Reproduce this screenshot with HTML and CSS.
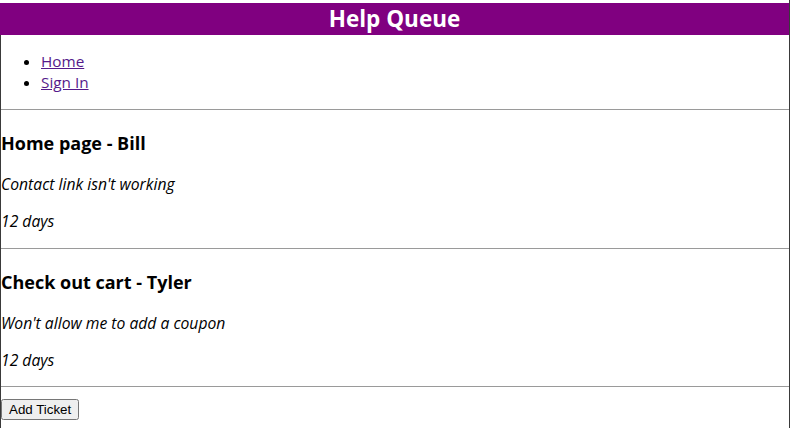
FILE: index.html
```html
<!DOCTYPE html>
<html>
<head>
<meta charset="utf-8">
<link rel="stylesheet" href="styles.css">
</head>
<body>
<div class="page">
  <header class="bar"><h1 class="title">Help Queue</h1></header>
  <div class="content">
    <ul class="nav">
      <li><a href="#" class="link">Home</a></li>
      <li><a href="#" class="link">Sign In</a></li>
    </ul>
    <hr class="rule">
    <div class="ticket">
      <h3 class="ticket-title">Home page - Bill</h3>
      <p class="ticket-text">Contact link isn't working</p>
      <p class="ticket-text">12 days</p>
    </div>
    <hr class="rule">
    <div class="ticket">
      <h3 class="ticket-title">Check out cart - Tyler</h3>
      <p class="ticket-text">Won't allow me to add a coupon</p>
      <p class="ticket-text">12 days</p>
    </div>
    <hr class="rule">
    <div class="actions"><button class="btn">Add Ticket</button></div>
  </div>
</div>
</body>
</html>
```
FILE: styles.css
```css
html, body {
  margin: 0;
  padding: 0;
  background: #fff;
}
body {
  font-family: "Open Sans", "Noto Sans", sans-serif;
  color: #000;
}
.page {
  width: 789px;
  min-height: 428px;
  border-right: 1px solid #3a3a3a;
  padding-top: 3px;
  box-sizing: content-box;
}
.bar {
  background: #800080;
}
.title {
  margin: 0;
  font-size: 22.5px;
  line-height: 32px;
  font-weight: bold;
  color: #fff;
  text-align: center;
}
.content {
  border-left: 1px solid #3a3a3a;
  min-height: 393px;
  display: flow-root;
}
.nav {
  margin: 16px 0;
  padding-left: 40px;
  font-size: 15.3px;
  line-height: 21px;
}
.link {
  color: #551a8b;
}
.rule {
  margin: 0;
  border: 0;
  border-top: 1px solid #9a9a9a;
  height: 0;
}
.ticket {
  padding: 21px 0 16px;
}
.ticket + .rule + .ticket {
  padding-bottom: 15px;
}
.ticket-title {
  margin: 0 0 18px;
  font-size: 18px;
  line-height: 25px;
  font-weight: bold;
}
.ticket-text {
  margin: 16px 0 0;
  font-size: 15.7px;
  line-height: 21px;
  font-style: italic;
}
.ticket-title + .ticket-text {
  margin-top: 0;
}
.actions {
  padding-top: 10px;
}
.btn {
  font-family: "Liberation Sans", Arial, sans-serif;
  font-size: 13.33px;
  margin: 0;
}
```
